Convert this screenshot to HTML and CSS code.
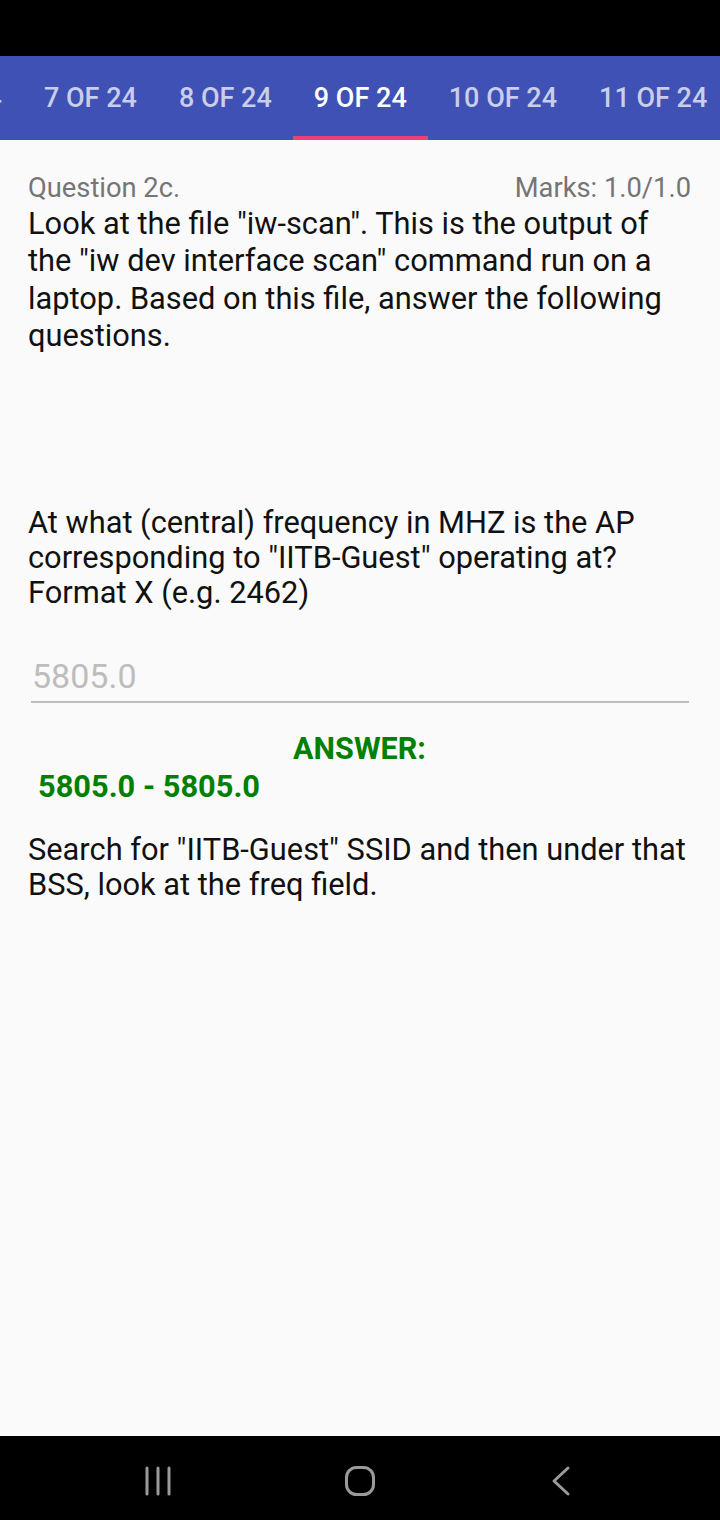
FILE: index.html
```html
<!DOCTYPE html>
<html>
<head>
<meta charset="utf-8">
<link rel="stylesheet" href="styles.css">
</head>
<body>
<div class="status"></div>
<div class="tabs">
  <div class="strip">
    <div class="tab">6 OF 24</div>
    <div class="tab">7 OF 24</div>
    <div class="tab">8 OF 24</div>
    <div class="tab active">9 OF 24</div>
    <div class="tab">10 OF 24</div>
    <div class="tab">11 OF 24</div>
  </div>
</div>
<main class="content">
  <div class="head">
    <span>Question 2c.</span>
    <span>Marks: 1.0/1.0</span>
  </div>
  <p class="intro">Look at the file "iw-scan". This is the output of the "iw dev interface scan" command run on a laptop. Based on this file, answer the following questions.</p>
  <p class="question">At what (central) frequency in MHZ is the AP corresponding to "IITB-Guest" operating at? Format X (e.g. 2462)</p>
  <div class="input">5805.0</div>
  <div class="answer-label">ANSWER:</div>
  <div class="answer-range">5805.0 - 5805.0</div>
  <p class="explain">Search for "IITB-Guest" SSID and then under that BSS, look at the freq field.</p>
</main>
<nav class="navbar">
  <div class="navcell">
    <svg width="30" height="30" viewBox="0 0 30 30"><g stroke="#9a9a9a" stroke-width="3" stroke-linecap="round"><line x1="3" y1="2" x2="3" y2="28"/><line x1="14" y1="2" x2="14" y2="28"/><line x1="25" y1="2" x2="25" y2="28"/></g></svg>
  </div>
  <div class="navcell">
    <svg width="34" height="34" viewBox="0 0 34 34"><rect x="3.5" y="3.5" width="27" height="27" rx="10" ry="10" fill="none" stroke="#9a9a9a" stroke-width="3"/></svg>
  </div>
  <div class="navcell">
    <svg width="22" height="32" viewBox="0 0 22 32"><polyline points="18,3 4,16 18,29" fill="none" stroke="#9a9a9a" stroke-width="3" stroke-linecap="round" stroke-linejoin="round"/></svg>
  </div>
</nav>
</body>
</html>
```

FILE: styles.css
```css
html, body {
  margin: 0;
  padding: 0;
}
body {
  width: 720px;
  height: 1520px;
  display: flex;
  flex-direction: column;
  background: #fafafa;
  font-family: Roboto, "Liberation Sans", sans-serif;
  overflow: hidden;
}
.status {
  height: 56px;
  background: #000;
  flex: none;
}
.tabs {
  height: 84px;
  background: #3f51b5;
  overflow: hidden;
  flex: none;
}
.strip {
  display: flex;
  height: 84px;
  margin-left: -112px;
}
.tab {
  flex: none;
  box-sizing: border-box;
  height: 84px;
  padding: 0 21px;
  display: flex;
  align-items: center;
  font-size: 27px;
  font-weight: 500;
  color: rgba(255, 255, 255, 0.72);
  border-top: 4px solid transparent;
  border-bottom: 4px solid transparent;
  white-space: nowrap;
}
.tab.active {
  color: #fff;
  border-bottom-color: #ec407a;
}
.content {
  flex: 1;
  padding: 0 29px 0 28px;
}
.head {
  display: flex;
  justify-content: space-between;
  margin-top: 31.5px;
  font-size: 27.3px;
  line-height: 32px;
  color: #757575;
}
.intro {
  margin: 1px 3px 0 0;
  font-size: 30.8px;
  line-height: 37.5px;
  color: #111;
}
.question {
  margin: 150.5px 3px 0 0;
  font-size: 30.8px;
  line-height: 35px;
  color: #111;
}
.input {
  margin: 45.5px 2px 0 3px;
  padding: 0 0 5.5px 1px;
  font-size: 34px;
  line-height: 40px;
  color: #bdbdbd;
  border-bottom: 2px solid #bdbdbd;
}
.answer-label {
  margin-top: 28.5px;
  text-align: center;
  font-size: 30.5px;
  line-height: 34px;
  font-weight: 700;
  color: #008000;
}
.answer-range {
  margin-top: 3px;
  padding-left: 10px;
  font-size: 30.8px;
  line-height: 36px;
  font-weight: 700;
  color: #008000;
}
.explain {
  margin: 27.5px 3px 0 0;
  font-size: 30.8px;
  line-height: 35px;
  color: #111;
}
.navbar {
  box-sizing: border-box;
  height: 84px;
  padding-top: 6px;
  flex: none;
  background: #000;
  display: flex;
  justify-content: center;
  align-items: center;
}
.navcell {
  width: 201px;
  display: flex;
  justify-content: center;
  align-items: center;
}
```
